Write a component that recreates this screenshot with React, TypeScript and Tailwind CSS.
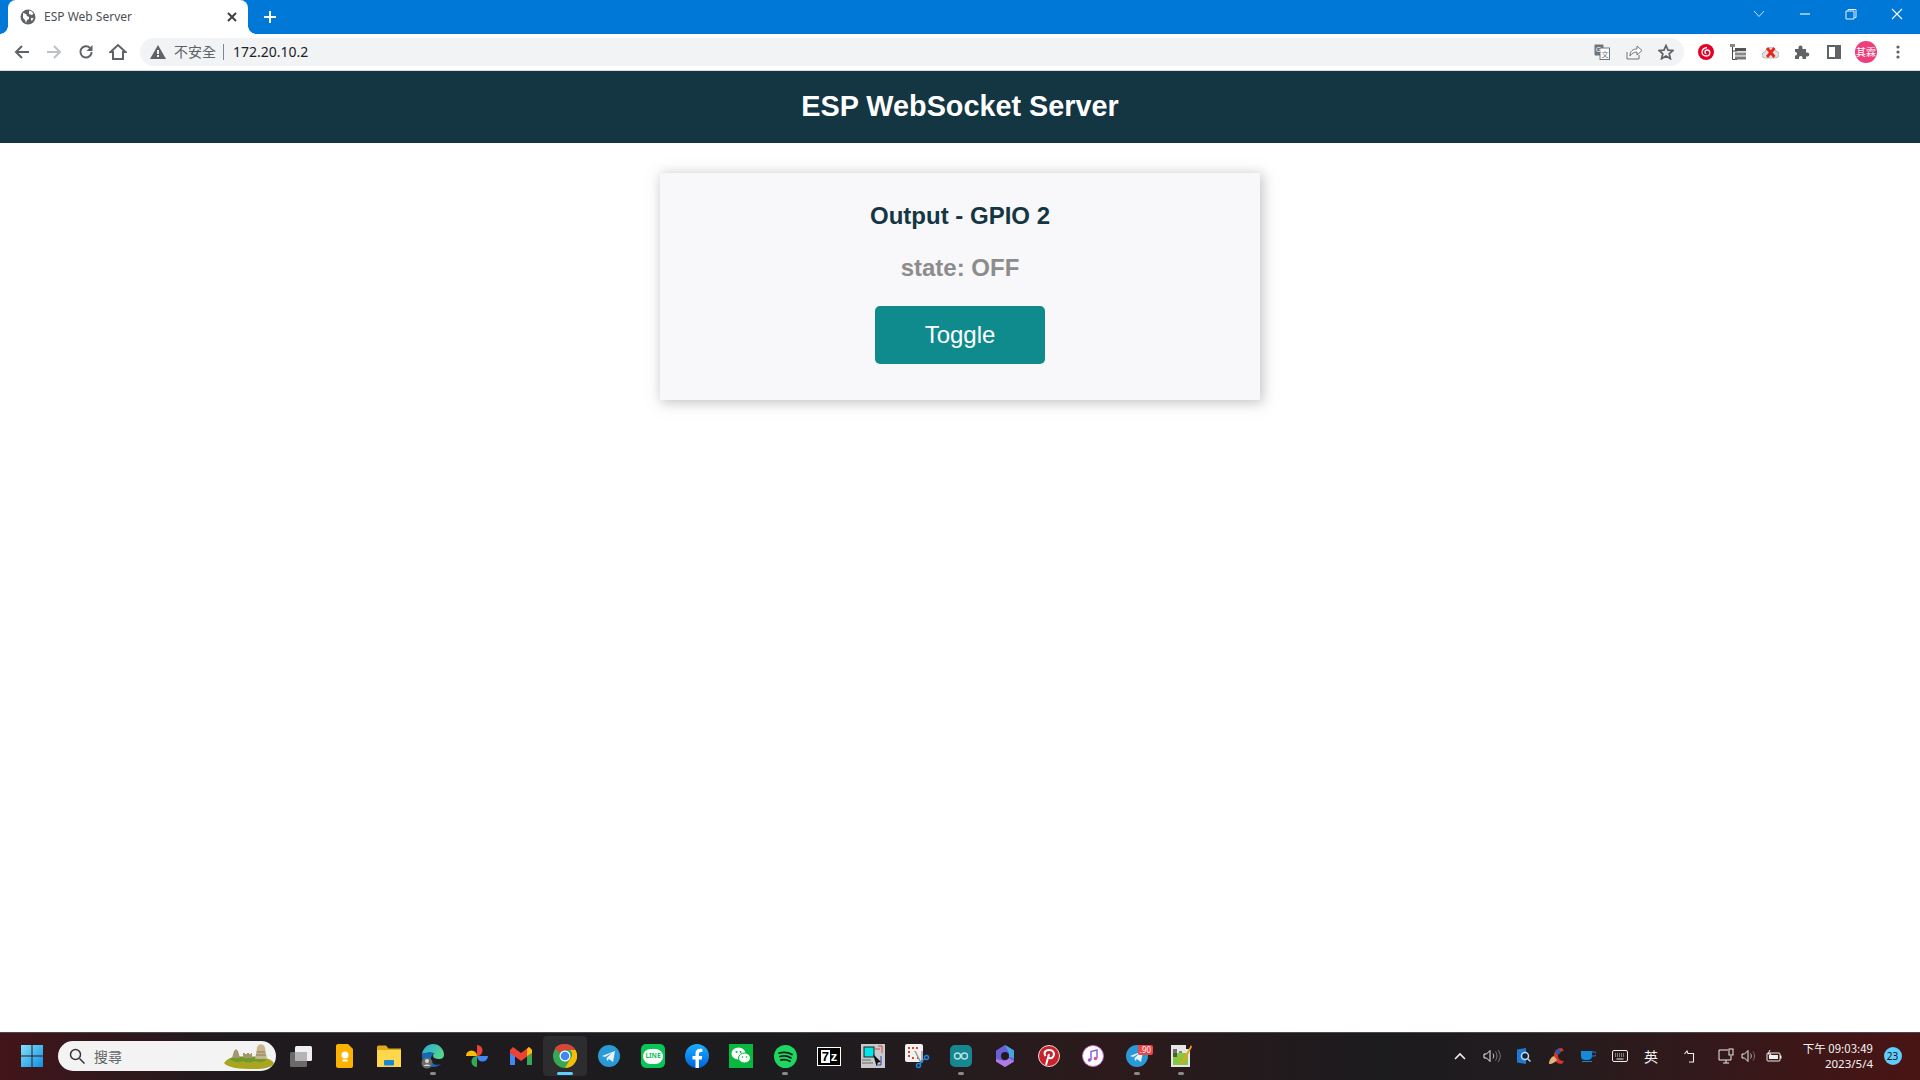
import React from "react";

const S = ({ w = 20, h = 20, vb = "0 0 20 20", children }: { w?: number; h?: number; vb?: string; children: React.ReactNode }) => (
  <svg width={w} height={h} viewBox={vb} fill="none" className="block shrink-0">{children}</svg>
);

const C = "#5f6368";

function TabBar() {
  return (
    <div className="h-[34px] bg-[#0078d7] flex items-end shrink-0 pl-2 text-white">
      <div className="relative w-[240px] h-[34px] bg-white rounded-t-[8px] flex items-center pl-[12px] pr-[8px]">
        <span className="absolute left-[-8px] bottom-0 w-2 h-2 bg-[radial-gradient(circle_at_0_0,transparent_7.5px,white_8px)]" />
        <span className="absolute right-[-8px] bottom-0 w-2 h-2 bg-[radial-gradient(circle_at_100%_0,transparent_7.5px,white_8px)]" />
        <S w={16} h={16} vb="0 0 16 16">
          <circle cx="8" cy="8" r="7.5" fill={C} />
          <path d="M3 4l3 1 1 2 2 1 0 2-2 1-1 3-1-3-2-2zM9 1.500l3 1 1.500 2.500-2 1-2.500-1zM11 9l2.500 0-1.500 3-1-1z" fill="#fff" />
        </S>
        <span className="ml-[8px] text-[12px] text-[#4b4f54] font-['Noto_Sans',sans-serif] flex-1">ESP Web Server</span>
        <S w={16} h={16} vb="0 0 16 16"><path d="M4 4l8 8M12 4l-8 8" stroke="#3c4043" strokeWidth="2" /></S>
      </div>
      <div className="h-[34px] w-[36px] ml-[4px] flex items-center justify-center">
        <S w={16} h={16} vb="0 0 16 16"><path d="M8 2v12M2 8h12" stroke="#fff" strokeWidth="2" /></S>
      </div>
      <div className="ml-auto flex h-[34px] items-center">
        <div className="w-[46px] flex justify-center mb-[6px]">
          <S w={12} h={8} vb="0 0 12 8"><path d="M1 1l5 5.500L11 1" stroke="#cfe4f7" strokeWidth="1" /></S>
        </div>
        <div className="w-[46px] flex justify-center mb-[6px]">
          <S w={12} h={4} vb="0 0 12 4"><path d="M1 2h10" stroke="#e8f2fb" strokeWidth="1.200" /></S>
        </div>
        <div className="w-[46px] flex justify-center mb-[6px]">
          <S w={12} h={12} vb="0 0 12 12"><path d="M3 3V1.500h8v8H9.500M1 3h8v8H1z" stroke="#e8f2fb" strokeWidth="1" /></S>
        </div>
        <div className="w-[46px] flex justify-center mb-[6px]">
          <S w={12} h={12} vb="0 0 12 12"><path d="M1 1l10 10M11 1L1 11" stroke="#fff" strokeWidth="1.100" /></S>
        </div>
      </div>
    </div>
  );
}

function ToolBar() {
  return (
    <div className="h-[37px] bg-white flex items-center shrink-0 border-b border-[#dadce0] pl-[6px] pr-[6px] pb-[1px]">
      <div className="w-[32px] flex justify-center">
        <S w={16} h={16} vb="0 0 16 16"><path d="M15 8H2.500M8 2L2 8l6 6" stroke={C} strokeWidth="2" /></S>
      </div>
      <div className="w-[32px] flex justify-center">
        <S w={16} h={16} vb="0 0 16 16"><path d="M1 8h12.500M8 2l6 6-6 6" stroke="#bdc1c6" strokeWidth="2" /></S>
      </div>
      <div className="w-[32px] flex justify-center">
        <S w={16} h={16} vb="0 0 16 16"><path d="M13.600 8a5.600 5.600 0 1 1-1.600-4" stroke={C} strokeWidth="2" /><path d="M14.500 1v6h-6z" fill={C} /></S>
      </div>
      <div className="w-[32px] flex justify-center">
        <S w={18} h={18} vb="0 0 18 18"><path d="M1.500 9L9 2l7.500 7H14v7H4V9z" stroke={C} strokeWidth="2" /></S>
      </div>
      <div className="ml-[6px] flex-1 h-[28px] bg-[#f1f3f4] rounded-full flex items-center pl-[10px] pr-[10px]">
        <S w={16} h={14} vb="0 0 16 14"><path d="M8 0l8 14H0z" fill={C} /><path d="M7 5h2v4H7zM7 10h2v2H7z" fill="#f1f3f4" /></S>
        <span className="ml-[8px] text-[14px] text-[#5f6368] font-['Noto_Sans_CJK_TC',sans-serif]">不安全</span>
        <span className="ml-[7px] h-[16px] w-px bg-[#80868b]" />
        <span className="ml-[9px] text-[14px] text-[#202124] font-['Noto_Sans',sans-serif]">172.20.10.2</span>
        <div className="ml-auto flex items-center gap-[16px]">
          <S w={16} h={16} vb="0 0 16 16"><rect x="0.500" y="0.500" width="9" height="11" rx="1" fill="#70757a" /><rect x="6" y="4" width="9.500" height="11.500" fill="#fff" stroke="#70757a" /><text x="1.700" y="8" fontSize="7" fill="#fff" fontFamily="Liberation Sans">G</text><text x="7.500" y="12.500" fontSize="7" fill="#70757a" fontFamily="Noto Sans CJK TC">文</text></S>
          <S w={16} h={16} vb="0 0 16 16"><path d="M1 8v7h12v-4" stroke="#70757a" /><path d="M4 12c0-5 3-7 7-7V2l5 4.500L11 11V8c-3 0-5 1-7 4z" stroke="#70757a" fill="#fff" /></S>
          <S w={16} h={16} vb="0 0 16 16"><path d="M8 1.500l2 4.600 5 .4-3.800 3.300 1.200 4.900L8 12.100 3.600 14.700l1.200-4.900L1 6.500l5-.4z" stroke={C} strokeWidth="1.700" /></S>
        </div>
      </div>
      <div className="ml-[6px] flex items-center">
        <div className="w-[32px] flex justify-center">
          <S w={16} h={16} vb="0 0 16 16"><circle cx="8" cy="8" r="8" fill="#e60026" /><path d="M9 3.500C6 4 4 5.600 4 8.300c0 2.300 2 3.700 4 3.700 2.200 0 3.800-1.500 3.800-3.300C11.800 7 10.500 6 9.200 6 7.800 6 7 7 7 8.200 7 9 7.600 9.600 8.300 9.600" stroke="#fff" strokeWidth="1.300" /></S>
        </div>
        <div className="w-[32px] flex justify-center">
          <S w={16} h={16} vb="0 0 16 16"><rect x="0" y="0" width="5" height="3" fill="#888" /><path d="M2.500 3v12.500H7M2.500 7H7" stroke="#444" /><rect x="5" y="4" width="11" height="3.200" fill="#555" /><rect x="5" y="8.500" width="11" height="3" fill="#888" /><rect x="5" y="12.500" width="11" height="3" fill="#777" /></S>
        </div>
        <div className="w-[32px] flex justify-center">
          <S w={17} h={14} vb="0 0 17 14"><path d="M3 13a3 3 0 0 1 0-6 5.500 5.500 0 0 1 10.500-1 3.500 3.500 0 0 1 0 7z" fill="#e3e3e3" stroke="#b8b8b8" /><path d="M5 3l7.500 9M12.500 3L5 12" stroke="#e5291f" strokeWidth="2.800" /></S>
        </div>
        <div className="w-[32px] flex justify-center">
          <S w={16} h={16} vb="0 0 16 16"><path d="M1 5h3.500V3.500a2 2 0 0 1 4 0V5H12v3.500h1.300a2 2 0 0 1 0 4H12V15H8.500v-1.500a1.800 1.800 0 0 0-3.500 0V15H1v-3.500h1a2 2 0 0 0 0-3.500H1z" fill={C} /></S>
        </div>
        <div className="w-[32px] flex justify-center">
          <S w={14} h={14} vb="0 0 14 14"><rect x="1" y="1" width="12" height="12" stroke={C} strokeWidth="2" /><rect x="8" y="1" width="5" height="12" fill={C} /></S>
        </div>
        <div className="w-[32px] flex justify-center">
          <span className="w-[22px] h-[22px] rounded-full bg-[#ec3f7c] text-white text-[10px] leading-[22px] text-center font-['Noto_Sans_CJK_TC',sans-serif]">其霖</span>
        </div>
        <div className="w-[32px] flex justify-center">
          <S w={4} h={14} vb="0 0 4 14"><circle cx="2" cy="2" r="1.600" fill={C} /><circle cx="2" cy="7" r="1.600" fill={C} /><circle cx="2" cy="12" r="1.600" fill={C} /></S>
        </div>
      </div>
    </div>
  );
}

function Page() {
  return (
    <div className="flex-1 bg-white flex flex-col font-['Liberation_Sans',sans-serif] min-h-0">
      <div className="h-[72px] bg-[#143642] flex items-center justify-center shrink-0">
        <h1 className="text-[28.8px] font-bold text-white">ESP WebSocket Server</h1>
      </div>
      <div className="pt-[30px] flex justify-center">
        <div className="w-[600px] h-[227px] bg-[#f8f7f9] shadow-[2px_2px_12px_1px_rgba(140,140,140,0.5)] flex flex-col items-center pt-[26px]">
          <h2 className="text-[24px] leading-[34px] font-bold text-[#143642]">Output - GPIO 2</h2>
          <p className="mt-[18px] text-[24px] leading-[34px] font-bold text-[#8c8c8c]">state: OFF</p>
          <button className="mt-[21px] w-[170px] h-[58px] bg-[#0f8b8d] rounded-[5px] text-[24px] text-white">Toggle</button>
        </div>
      </div>
    </div>
  );
}

const Dot = ({ c = "#8a8a8a", w = 6 }: { c?: string; w?: number }) => (
  <span className="absolute bottom-[1px] left-1/2 -translate-x-1/2 h-[3px] rounded-full" style={{ width: w, background: c }} />
);

const Slot = ({ children, dot, active }: { children: React.ReactNode; dot?: boolean; active?: boolean }) => (
  <div className={`relative w-[44px] h-[40px] flex items-center justify-center rounded-[4px] ${active ? "bg-[#2d2d2f]" : ""}`}>
    {children}
    {dot && <Dot />}
    {active && <Dot c="#60cdff" w={16} />}
  </div>
);

function Taskbar() {
  return (
    <div className="h-[48px] shrink-0 flex items-center pb-[1px] border-t border-[#4a4a4c] font-['Noto_Sans',sans-serif] text-white bg-[linear-gradient(90deg,#42151a_0%,#1f1a1e_12%,#1c1c1f_40%,#2c1a1c_58%,#1c1b1e_72%,#221c1f_80%,#4a1414_100%)]">
      <div className="w-[44px] ml-[10px] flex justify-center">
        <S w={24} h={24} vb="0 0 24 24">
          <defs>
            <linearGradient id="win" x1="0" y1="0" x2="1" y2="1">
              <stop offset="0" stopColor="#7fe3f9" />
              <stop offset="1" stopColor="#0f8ee6" />
            </linearGradient>
          </defs>
          <path d="M1 1h10.500v10.500H1zM12.500 1H23v10.500H12.500zM1 12.500h10.500V23H1zM12.500 12.500H23V23H12.500z" fill="url(#win)" />
        </S>
      </div>
      <div className="ml-[4px] w-[218px] h-[30px] rounded-full bg-[#f3f3f3] flex items-center pl-[11px] relative">
        <S w={16} h={16} vb="0 0 16 16"><circle cx="6.500" cy="6.500" r="5" stroke="#333" strokeWidth="1.500" /><path d="M10.500 10.500l5 5" stroke="#333" strokeWidth="1.500" /></S>
        <span className="ml-[9px] text-[14px] text-[#666] font-['Noto_Sans_CJK_TC',sans-serif]">搜尋</span>
        <div className="ml-auto mr-[2px]">
          <S w={50} h={26} vb="0 0 50 26">
            <path d="M0 20c4-6 12-7 18-6h14c8 0 14 1 18 6-2 4-8 6-20 6-14 0-26-1-30-6z" fill="#a9a51f" />
            <path d="M5 16c6-3 14-3 18-1 6-2 14-2 20 1-2 3-8 4-12 2-4 2-8 2-12 0-4 2-10 1-14-2z" fill="#6f9a2a" />
            <path d="M31 16l2-11c1-5 7-5 8 0l2 11z" fill="#c5b48c" />
            <path d="M33 9h8M32 12h10" stroke="#8a7a58" />
            <path d="M8 15l2-7 2-2 2 2 2 7zM19 15v-5h2v1h2v-1h2v1h2v-1h1v5z" fill="#a59672" />
          </S>
        </div>
      </div>
      <div className="ml-[3px] flex items-center">
        <Slot><S w={24} h={22} vb="0 0 24 22"><rect x="6" y="1" width="17" height="15" rx="1.500" fill="#f0f0f0" /><rect x="1" y="7" width="17" height="15" rx="1.500" fill="#6a6a6a" /><rect x="6" y="7" width="12" height="9" fill="#b5b5b5" /></S></Slot>
        <Slot><S w={18} h={24} vb="0 0 18 24"><path d="M2 0h10l5 5v17a2 2 0 0 1-2 2H2a2 2 0 0 1-2-2V2a2 2 0 0 1 2-2z" fill="#fbb202" /><circle cx="9" cy="11" r="3.500" fill="#fff" /><rect x="6.500" y="15.500" width="5" height="2" fill="#fff" /></S></Slot>
        <Slot><S w={24} h={22} vb="0 0 24 22"><path d="M0 2a1.500 1.500 0 0 1 1.500-1.500H9l2.500 3H24V6H0z" fill="#e2a91a" /><path d="M0 5h24v17H0z" fill="#fcd84a" /><rect x="7" y="15" width="10" height="5.500" rx="1" fill="#1a84d6" /></S></Slot>
        <Slot dot>
          <S w={24} h={26} vb="0 0 24 26">
            <defs>
              <linearGradient id="edge" x1="0" y1="0" x2="1" y2="0.600">
                <stop offset="0" stopColor="#2ba6e0" />
                <stop offset="1" stopColor="#52d68a" />
              </linearGradient>
            </defs>
            <path d="M1 11C2 5 7 1 12 1a11 11 0 0 1 11 11c0 2.500-2 4-4.500 4-4 0-6.500-1-6.500-3.500 0-1 .7-1.800 1.500-2.300C9 8.500 3 10 1 11z" fill="url(#edge)" />
            <path d="M1 11c-1 7 4 13 11 13 3 0 6-1 8-3-5 2-11 0-10-6 .3-2 1.500-3.500 3.500-4.800C9 8.500 3 10 1 11z" fill="#1668b5" />
            <circle cx="6" cy="20" r="5.500" fill="#6a6a6a" />
            <circle cx="6" cy="18" r="2" fill="#d8d8d8" />
            <path d="M2.500 23c1-2 6-2 7 0z" fill="#d8d8d8" />
          </S>
        </Slot>
        <Slot><S w={24} h={24} vb="0 0 24 24"><path d="M12 12H1a5.500 5.500 0 0 1 11 0z" fill="#fbbc04" /><path d="M12 12V1a5.500 5.500 0 0 1 0 11z" fill="#ea4335" /><path d="M12 12h11a5.500 5.500 0 0 1-11 0z" fill="#4285f4" /><path d="M12 12v11a5.500 5.500 0 0 1 0-11z" fill="#34a853" /></S></Slot>
        <Slot><S w={24} h={20} vb="0 0 24 20"><path d="M1 4v15h5V8z" fill="#4285f4" /><path d="M18 8v11h5V4z" fill="#34a853" /><path d="M1 4l3-3 8 6 8-6 3 3v3l-11 8L1 7z" fill="#ea4335" /><path d="M18 3l2-2 3 3v3l-5 3z" fill="#fbbc04" /></S></Slot>
        <Slot active><S w={24} h={24} vb="0 0 24 24"><circle cx="12" cy="12" r="12" fill="#34a853" /><path d="M12 0a12 12 0 0 1 10.400 6H12a6 6 0 0 0-5.500 3.500L2 4a12 12 0 0 1 10-4z" fill="#db4437" /><path d="M22.400 6A12 12 0 0 1 12 24l5.200-9a6 6 0 0 0 0-9z" fill="#fbbc04" /><circle cx="12" cy="12" r="5.500" fill="#fff" /><circle cx="12" cy="12" r="4.300" fill="#4285f4" /></S></Slot>
        <Slot><S w={22} h={22} vb="0 0 22 22"><circle cx="11" cy="11" r="11" fill="#2a9ad6" /><path d="M4 11l13-5-2 11-4-3-2 2-.5-3 5.500-5-7 4z" fill="#e8f4fb" /></S></Slot>
        <Slot><div className="w-[24px] h-[24px] rounded-[5px] bg-[#06c755] flex items-center justify-center"><div className="relative w-[20px] h-[15px] bg-white rounded-[8px] flex items-center justify-center text-[6.500px] font-bold text-[#06c755] leading-none">LINE</div></div></Slot>
        <Slot>
          <S w={24} h={24} vb="0 0 24 24">
            <defs>
              <linearGradient id="fb" x1="0" y1="0" x2="0" y2="1">
                <stop offset="0" stopColor="#19afff" />
                <stop offset="1" stopColor="#0062e0" />
              </linearGradient>
            </defs>
            <circle cx="12" cy="12" r="12" fill="url(#fb)" />
            <path d="M10.500 24v-8.500H7.500V12h3V9.300c0-3 1.800-4.600 4.500-4.600 1.300 0 2.400.2 2.400.2v3h-1.500c-1.500 0-2 .9-2 1.900V12h3.300l-.5 3.500h-2.800V24z" fill="#fff" />
          </S>
        </Slot>
        <Slot><div className="w-[24px] h-[24px] bg-[#09b83e] flex items-center justify-center"><S w={20} h={18} vb="0 0 20 18"><ellipse cx="7.500" cy="6.500" rx="7" ry="6" fill="#fff" /><ellipse cx="13.500" cy="11" rx="6" ry="5" fill="#fff" stroke="#09b83e" /><circle cx="5.500" cy="5" r="1" fill="#09b83e" /><circle cx="9.500" cy="5" r="1" fill="#09b83e" /><circle cx="11.500" cy="10" r=".8" fill="#09b83e" /><circle cx="15.500" cy="10" r=".8" fill="#09b83e" /></S></div></Slot>
        <Slot dot><S w={23} h={23} vb="0 0 23 23"><circle cx="11.500" cy="11.500" r="11.500" fill="#1ed760" /><path d="M5 8c4-1 9-1 13 1.500M6 11.500c4-1 8-.5 11 1.500M7 15c3-.7 6-.3 9 1.200" stroke="#14211a" strokeWidth="1.800" strokeLinecap="round" /></S></Slot>
        <Slot><div className="w-[24px] h-[19px] bg-black border border-white flex items-center justify-center gap-[1px] font-['Liberation_Sans',sans-serif] font-bold text-[13px] leading-none"><span className="bg-white text-black px-[1px]">7</span><span>z</span></div></Slot>
        <Slot><S w={24} h={24} vb="0 0 24 24"><rect width="24" height="24" fill="#c9c9c9" /><rect x="3" y="3" width="10" height="10" fill="#00e5e5" stroke="#222" /><path d="M17 2h4v7M14 5h5" stroke="#d64545" /><path d="M20 12v9h-5" stroke="#2a3fb5" /><path d="M12 10l8 8-3 .5-1.500 3.500z" fill="#111" /><path d="M1 16h9M1 19h11" stroke="#666" /></S></Slot>
        <Slot><S w={25} h={25} vb="0 0 25 25"><rect x="0" y="0" width="18" height="18" rx="2" fill="#f1f1f1" /><path d="M3 3h2v2H3zM7 3h2v2H7zM11 3h2v2h-2zM3 7h2v2H3zM3 11h2v2H3zM7 13h2v2H7zM12 13h2v2h-2z" fill="#d84a2c" /><path d="M10 7l5 10 3 1M17 7v11" stroke="#999" strokeWidth="1.500" /><circle cx="21.500" cy="13.500" r="2" stroke="#1e88e5" strokeWidth="1.500" /><circle cx="13.500" cy="21.500" r="2" stroke="#1e88e5" strokeWidth="1.500" /><path d="M17 17l3-2.500M17 17l-2 3" stroke="#1e88e5" strokeWidth="1.500" /></S></Slot>
        <Slot dot><div className="w-[22px] h-[22px] rounded-[5px] bg-[#15878f] flex items-center justify-center"><S w={16} h={8} vb="0 0 16 8"><circle cx="4.500" cy="4" r="3" stroke="#b5e3e5" strokeWidth="1.400" /><circle cx="11.500" cy="4" r="3" stroke="#b5e3e5" strokeWidth="1.400" /></S></div></Slot>
        <Slot>
          <S w={20} h={24} vb="0 0 20 24">
            <path d="M10 1l9 5.500v11L10 23l-9-5.500v-11z" fill="#6a60d8" />
            <path d="M10 1l9 5.500V14l-5-1V9z" fill="#45a6e0" />
            <path d="M1 15v2.500L10 23l9-5.500L14 14l-4 3z" fill="#b07ce0" />
            <circle cx="10" cy="12" r="4" fill="#241a20" />
          </S>
        </Slot>
        <Slot><S w={22} h={22} vb="0 0 22 22"><circle cx="11" cy="11" r="10.500" fill="#c8232c" stroke="#f0d8d8" /><path d="M8 20l3-11M7.500 11C5 7 8 5 11 5c4 0 6 3 4.500 6-1 2.500-4 3-5 1" stroke="#fff" strokeWidth="2" /></S></Slot>
        <Slot><S w={22} h={22} vb="0 0 22 22"><circle cx="11" cy="11" r="10.500" fill="#fff" stroke="#c86ac8" /><path d="M9 15V6.500l6-1.500v8" stroke="#8a63e0" strokeWidth="1.500" /><circle cx="7.500" cy="15" r="1.800" fill="#a45ce0" /><circle cx="13.500" cy="13.500" r="1.800" fill="#e0529c" /></S></Slot>
        <Slot dot>
          <S w={22} h={22} vb="0 0 22 22"><circle cx="11" cy="11" r="11" fill="#2a9ad6" /><path d="M4 11l13-5-2 11-4-3-2 2-.5-3 5.500-5-7 4z" fill="#e8f4fb" /></S>
          <span className="absolute top-[9px] left-[23px] h-[10px] w-[15px] rounded-[2px] bg-[#ef4444] text-[8px] leading-[10px] text-white text-center">.90</span>
        </Slot>
        <Slot dot><S w={22} h={24} vb="0 0 22 24"><path d="M1 1h15v4h4v18H1z" fill="#e6e6e6" /><path d="M3 9h15v12H3z" fill="#8cc63f" /><path d="M4 5v8M6 5v8M9 8h3" stroke="#222" strokeWidth="1.200" /><path d="M21 1L12 17l-1 3 3-2L22 3z" fill="#e9a21b" /></S></Slot>
      </div>
      <div className="ml-auto flex items-center h-full text-[#f4f4f4]">
        <div className="w-[26px] flex justify-center"><S w={12} h={8} vb="0 0 12 8"><path d="M1 7l5-5 5 5" stroke="#eee" strokeWidth="1.600" /></S></div>
        <div className="w-[38px] flex justify-center"><S w={18} h={14} vb="0 0 18 14"><path d="M1 5h2.500L7 1.500v11L3.500 9H1z" stroke="#eee" /><path d="M10 4.500c1 1.500 1 3.500 0 5" stroke="#ccc" /><path d="M12.500 2.500c2 3 2 6 0 9M15 1c3 4 3 8 0 12" stroke="#777" /></S></div>
        <div className="w-[26px] flex justify-center"><S w={15} h={16} vb="0 0 15 16"><path d="M0 1.500L9 0v16l-9-1.500z" fill="#1f78d1" /><circle cx="8" cy="8" r="3.500" fill="#10233a" stroke="#bfe0ff" strokeWidth="1.500" /><path d="M10.500 10.500l3 3" stroke="#d0d0d0" strokeWidth="1.500" /></S></div>
        <div className="w-[38px] flex justify-center">
          <S w={17} h={18} vb="0 0 17 18">
            <path d="M14 1C9 1 6 4 6 9c0 5 3 8 8 8l2-3c-3 0-6-2-6-5s3-5 6-5z" fill="#d9342b" />
            <path d="M11 1l1.500 5-3 2L7 4z" fill="#1f5ea8" />
            <path d="M1 17c0-4 2-7 5-8l3 4c-2 2-4 4-8 4z" fill="#e0b27c" />
          </S>
        </div>
        <div className="w-[26px] flex justify-center"><S w={15} h={11} vb="0 0 15 11"><path d="M0 0h11v5a4 4 0 0 1-4 4H4a4 4 0 0 1-4-4z" fill="#168ad6" /><path d="M11 1h2.500a1.500 1.500 0 0 1 0 4H11" stroke="#168ad6" /><path d="M1 10.500h10" stroke="#168ad6" /></S></div>
        <div className="w-[38px] flex justify-center"><S w={16} h={12} vb="0 0 16 12"><rect x=".5" y=".5" width="15" height="11" rx="1.500" stroke="#eee" /><path d="M3 4h10M3 6h10" stroke="#ddd" strokeDasharray="1 1" /><path d="M4.500 9h7" stroke="#eee" /></S></div>
        <div className="w-[24px] text-center text-[14px] font-['Noto_Sans_CJK_TC',sans-serif]">英</div>
        <div className="w-[52px] flex justify-center"><S w={11} h={13} vb="0 0 11 13"><path d="M.5 4L3 1l1 2.500h5.500V12H5" stroke="#eee" strokeWidth="1.100" /></S></div>
        <div className="w-[22px] flex justify-center"><S w={16} h={17} vb="0 0 16 17"><path d="M10 2H1v10h12V8M5 15h6M8 12v3" stroke="#eee" /><rect x="11" y="1" width="4" height="6" stroke="#eee" /></S></div>
        <div className="w-[24px] flex justify-center"><S w={16} h={14} vb="0 0 16 14"><path d="M1 5h2.500L7 1.500v11L3.500 9H1z" stroke="#eee" /><path d="M9.500 4.500c1 1.500 1 3.500 0 5" stroke="#bbb" /><path d="M12 2.500c2 3 2 6 0 9" stroke="#777" /></S></div>
        <div className="w-[26px] flex justify-center"><S w={16} h={13} vb="0 0 16 13"><rect x="1" y="3" width="13" height="8" rx="1" stroke="#eee" /><rect x="3" y="5" width="9" height="4" fill="#eee" /><rect x="14" y="5.500" width="1.500" height="3" fill="#eee" /><path d="M4 0L2 4h3L3 7" stroke="#eee" /></S></div>
        <div className="w-[86px] text-right text-[11.500px] leading-[16px]">
          <div className="font-['Noto_Sans_CJK_TC',sans-serif] leading-[16px]">下午 09:03:49</div>
          <div>2023/5/4</div>
        </div>
        <div className="w-[39px] mr-[8px] flex justify-center">
          <span className="w-[18px] h-[18px] rounded-full bg-[#60cdff] text-[#111] text-[10px] leading-[18px] text-center">23</span>
        </div>
      </div>
    </div>
  );
}

export default function App() {
  return (
    <div className="h-screen w-full flex flex-col overflow-hidden">
      <TabBar />
      <ToolBar />
      <Page />
      <Taskbar />
    </div>
  );
}
